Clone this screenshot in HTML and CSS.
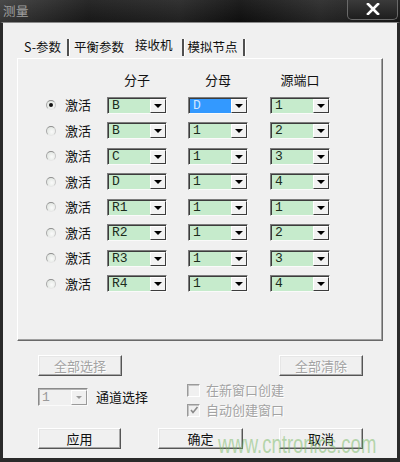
FILE: index.html
```html
<!DOCTYPE html>
<html>
<head>
<meta charset="utf-8">
<link rel="stylesheet" href="styles.css">
</head>
<body>
<div class="window">
  <div class="titlebar">
    <span class="title">测量</span>
    <div class="close"><svg width="14" height="12" viewBox="0 0 14 12"><path d="M2 1 L12 11 M12 1 L2 11" stroke="#fff" stroke-width="2.6" stroke-linecap="square"/></svg></div>
  </div>
  <div class="client">
    <div class="tabs">
      <span class="tab t1">S-参数</span><span class="sep s1"></span>
      <span class="tab t2">平衡参数</span>
      <span class="tab t3 active">接收机</span><span class="sep s2"></span>
      <span class="tab t4">模拟节点</span><span class="sep s3"></span>
    </div>
    <div class="panel">
      <div class="grid">
        <span></span><span></span><span class="hdr">分子</span><span class="hdr">分母</span><span class="hdr">源端口</span>

        <span class="radio on"></span><span class="lbl">激活</span>
        <span class="combo"><span class="field">B</span><span class="btn"><i></i></span></span>
        <span class="combo sel"><span class="field">D</span><span class="btn"><i></i></span></span>
        <span class="combo"><span class="field">1</span><span class="btn"><i></i></span></span>

        <span class="radio"></span><span class="lbl">激活</span>
        <span class="combo"><span class="field">B</span><span class="btn"><i></i></span></span>
        <span class="combo"><span class="field">1</span><span class="btn"><i></i></span></span>
        <span class="combo"><span class="field">2</span><span class="btn"><i></i></span></span>

        <span class="radio"></span><span class="lbl">激活</span>
        <span class="combo"><span class="field">C</span><span class="btn"><i></i></span></span>
        <span class="combo"><span class="field">1</span><span class="btn"><i></i></span></span>
        <span class="combo"><span class="field">3</span><span class="btn"><i></i></span></span>

        <span class="radio"></span><span class="lbl">激活</span>
        <span class="combo"><span class="field">D</span><span class="btn"><i></i></span></span>
        <span class="combo"><span class="field">1</span><span class="btn"><i></i></span></span>
        <span class="combo"><span class="field">4</span><span class="btn"><i></i></span></span>

        <span class="radio"></span><span class="lbl">激活</span>
        <span class="combo"><span class="field">R1</span><span class="btn"><i></i></span></span>
        <span class="combo"><span class="field">1</span><span class="btn"><i></i></span></span>
        <span class="combo"><span class="field">1</span><span class="btn"><i></i></span></span>

        <span class="radio"></span><span class="lbl">激活</span>
        <span class="combo"><span class="field">R2</span><span class="btn"><i></i></span></span>
        <span class="combo"><span class="field">1</span><span class="btn"><i></i></span></span>
        <span class="combo"><span class="field">2</span><span class="btn"><i></i></span></span>

        <span class="radio"></span><span class="lbl">激活</span>
        <span class="combo"><span class="field">R3</span><span class="btn"><i></i></span></span>
        <span class="combo"><span class="field">1</span><span class="btn"><i></i></span></span>
        <span class="combo"><span class="field">3</span><span class="btn"><i></i></span></span>

        <span class="radio"></span><span class="lbl">激活</span>
        <span class="combo"><span class="field">R4</span><span class="btn"><i></i></span></span>
        <span class="combo"><span class="field">1</span><span class="btn"><i></i></span></span>
        <span class="combo"><span class="field">4</span><span class="btn"><i></i></span></span>
      </div>
    </div>
    <div class="row-a">
      <div class="button disabled w84">全部选择</div>
      <div class="button disabled w84">全部清除</div>
    </div>
    <div class="row-b">
      <div class="chan">
        <span class="dcombo"><span class="dfield">1</span><span class="dbtn"><i></i></span></span>
        <span class="chanlbl">通道选择</span>
      </div>
      <div class="checks">
        <div class="check"><span class="box"></span><span class="ctext">在新窗口创建</span></div>
        <div class="check"><span class="box"><svg width="10" height="10" viewBox="0 0 10 10"><path d="M2 5 L4 7.5 L8.5 2" stroke="#8a8a8a" stroke-width="1.6" fill="none"/></svg></span><span class="ctext">自动创建窗口</span></div>
      </div>
    </div>
    <div class="row-c">
      <div class="button w83">应用</div>
      <div class="button w85 mid">确定</div>
      <div class="button w84 last">取消</div>
    </div>
  </div>
  <div class="watermark">www.cntronics.com</div>
</div>
</body>
</html>
```
FILE: styles.css
```css
* { box-sizing: border-box; }
html, body { margin: 0; padding: 0; }
body {
  width: 400px;
  height: 462px;
  overflow: hidden;
  background: #111;
  font-family: "Noto Sans CJK SC", sans-serif;
  font-size: 13px;
}
.window {
  position: relative;
  width: 400px;
  height: 462px;
}
.titlebar {
  height: 22px;
  display: flex;
  justify-content: space-between;
  align-items: flex-start;
  background:
    linear-gradient(180deg, rgba(255,255,255,0.06) 0%, rgba(0,0,0,0.15) 100%),
    linear-gradient(90deg, #3e3e3e 0%, #1c1c1c 22%, #262626 45%, #111 60%, #2a2a2a 80%, #1a1a1a 100%);
}
.title {
  color: #a0a0a0;
  font-size: 12.5px;
  line-height: 22px;
  margin-left: 3px;
  letter-spacing: 0.5px;
}
.close {
  width: 51px;
  height: 21px;
  margin-right: 2px;
  margin-top: -1px;
  border: 1px solid #6a6a6a;
  border-top: none;
  border-radius: 0 0 5px 5px;
  background: linear-gradient(180deg, #3c3c3c, #1e1e1e);
  display: flex;
  align-items: center;
  justify-content: center;
}
.client {
  height: 440px;
  background: #f0f0f0;
  border-left: 3px solid #2a2a2a;
  border-right: 3px solid #2a2a2a;
  border-bottom: 4px solid #2a2a2a;
  border-top: 1px solid #8a8a8a;
  padding: 9px 14px 0 14px;
}
.tabs {
  height: 26px;
  padding-top: 4px;
  display: flex;
  align-items: center;
  color: #111;
  font-size: 12.5px;
  line-height: 18px;
}
.tab { white-space: nowrap; }
.t1 { margin-left: 7px; }
.sep {
  width: 2px;
  height: 17px;
  background: #505050;
  border-right: 1px solid #fff;
  box-sizing: content-box;
}
.s1 { margin-left: 6px; }
.t2 { margin-left: 4px; }
.t3 { margin-left: 11px; position: relative; top: -2px; }
.s2 { margin-left: 9px; }
.t4 { margin-left: 3px; }
.s3 { margin-left: 5px; }

.panel {
  height: 283px;
  border: 1px solid;
  border-color: #fff #696969 #696969 #fff;
  box-shadow: inset -1px -1px 0 #a0a0a0;
  padding: 8px 0 0 27px;
}
.grid {
  display: grid;
  grid-template-columns: 20px 42px 81px 82px 60px;
  grid-auto-rows: 25.5px;
  align-items: center;
}
.hdr {
  width: 60px;
  text-align: center;
  color: #111;
  line-height: 18px;
}
.lbl {
  color: #111;
  line-height: 18px;
}
.radio {
  width: 10px;
  height: 10px;
  margin-left: 1px;
  border-radius: 50%;
  border: 1px solid;
  border-color: #8f8f8f #c8c8c8 #e6e6e6 #a8a8a8;
  background: radial-gradient(circle at 60% 60%, #fafafa 0%, #e4e8e4 70%, #cfd6cf 100%);
  position: relative;
}
.radio.on::after {
  content: "";
  position: absolute;
  left: 2px;
  top: 2px;
  width: 4px;
  height: 4px;
  border-radius: 50%;
  background: #111;
}
.combo {
  width: 60px;
  height: 17px;
  display: flex;
  border: 1px solid;
  border-color: #7c7c7c #fafafa #fafafa #7c7c7c;
  box-shadow: inset 1px 1px 0 #3c3c3c;
  background: #c6ebcc;
  padding: 1px 0 0 1px;
}
.field {
  flex: 1;
  font-family: "Liberation Mono", monospace;
  font-size: 13px;
  line-height: 14px;
  color: #1c2c1c;
  padding-left: 3px;
  background: #c6ebcc;
}
.combo.sel .field {
  background: #3399ff;
  color: #cfe6ff;
}
.btn {
  width: 16px;
  height: 14px;
  background: #f2f2f2;
  border: 1px solid;
  border-color: #fff #3c3c3c #3c3c3c #fff;
  display: flex;
  align-items: center;
  justify-content: center;
}
.btn i {
  display: block;
  width: 0;
  height: 0;
  border-left: 4px solid transparent;
  border-right: 4px solid transparent;
  border-top: 4px solid #000;
}

.row-a {
  margin-top: 14px;
  display: flex;
  justify-content: space-between;
  padding: 0 20px 0 21px;
}
.button {
  height: 21px;
  background: #f0f0f0;
  border: 1px solid;
  border-color: #fff #555 #555 #fff;
  box-shadow: inset -1px -1px 0 #a8a8a8, inset 1px 1px 0 #e6e6e6;
  text-align: center;
  line-height: 19px;
  color: #111;
  font-size: 13px;
}
.button.disabled {
  color: #a3a3a3;
  text-shadow: 1px 1px 0 #fff;
}
.w83 { width: 83px; }
.w84 { width: 84px; }
.w85 { width: 85px; }

.row-b {
  margin-top: 4px;
  display: flex;
  padding-left: 21px;
}
.chan {
  width: 149px;
  display: flex;
  align-items: center;
  align-self: flex-start;
  margin-top: 8px;
}
.dcombo {
  width: 50px;
  height: 18px;
  display: flex;
  border: 1px solid;
  border-color: #8a8a8a #fafafa #fafafa #8a8a8a;
  box-shadow: inset 1px 1px 0 #b4b4b4;
  background: #f0f0f0;
  padding: 1px 0 0 1px;
}
.dfield {
  flex: 1;
  font-family: "Liberation Mono", monospace;
  font-size: 13px;
  line-height: 15px;
  color: #9a9a9a;
  padding-left: 2px;
}
.dbtn {
  width: 16px;
  height: 15px;
  border: 1px solid;
  border-color: #fff #9a9a9a #9a9a9a #fff;
  display: flex;
  align-items: center;
  justify-content: center;
}
.dbtn i {
  display: block;
  width: 0;
  height: 0;
  border-left: 3.5px solid transparent;
  border-right: 3.5px solid transparent;
  border-top: 3.5px solid #9a9a9a;
}
.chanlbl {
  margin-left: 8px;
  color: #111;
  font-size: 13px;
  line-height: 18px;
}
.checks {
  display: flex;
  flex-direction: column;
}
.check {
  height: 20px;
  display: flex;
  align-items: center;
}
.box {
  width: 13px;
  height: 13px;
  border: 1px solid;
  border-color: #9a9a9a #fff #fff #9a9a9a;
  box-shadow: inset 1px 1px 0 #c4c4c4;
  background: #f0f0f0;
  display: flex;
  align-items: center;
  justify-content: center;
}
.ctext {
  margin-left: 6px;
  color: #a3a3a3;
  text-shadow: 1px 1px 0 #fff;
  line-height: 18px;
}
.row-c {
  margin-top: 8px;
  display: flex;
  padding-left: 21px;
}
.mid { margin-left: 37px; }
.last { margin-left: 36px; }

.watermark {
  position: absolute;
  left: 218px;
  top: 429px;
  font-family: "Liberation Sans", sans-serif;
  font-size: 25px;
  line-height: 30px;
  color: rgba(120, 185, 100, 0.5);
  transform: scaleX(0.74);
  transform-origin: left top;
  white-space: nowrap;
}
```
